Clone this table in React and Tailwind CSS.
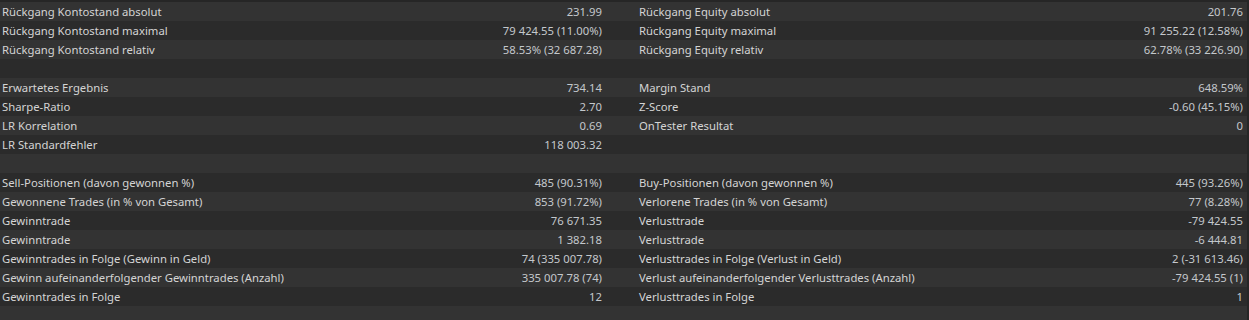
const rows = [
  ['Rückgang Kontostand absolut', '231.99', 'Rückgang Equity absolut', '201.76'],
  ['Rückgang Kontostand maximal', '79 424.55 (11.00%)', 'Rückgang Equity maximal', '91 255.22 (12.58%)'],
  ['Rückgang Kontostand relativ', '58.53% (32 687.28)', 'Rückgang Equity relativ', '62.78% (33 226.90)'],
  null,
  ['Erwartetes Ergebnis', '734.14', 'Margin Stand', '648.59%'],
  ['Sharpe-Ratio', '2.70', 'Z-Score', '-0.60 (45.15%)'],
  ['LR Korrelation', '0.69', 'OnTester Resultat', '0'],
  ['LR Standardfehler', '118 003.32', '', ''],
  null,
  ['Sell-Positionen (davon gewonnen %)', '485 (90.31%)', 'Buy-Positionen (davon gewonnen %)', '445 (93.26%)'],
  ['Gewonnene Trades (in % von Gesamt)', '853 (91.72%)', 'Verlorene Trades (in % von Gesamt)', '77 (8.28%)'],
  ['Gewinntrade', '76 671.35', 'Verlusttrade', '-79 424.55'],
  ['Gewinntrade', '1 382.18', 'Verlusttrade', '-6 444.81'],
  ['Gewinntrades in Folge (Gewinn in Geld)', '74 (335 007.78)', 'Verlusttrades in Folge (Verlust in Geld)', '2 (-31 613.46)'],
  ['Gewinn aufeinanderfolgender Gewinntrades (Anzahl)', '335 007.78 (74)', 'Verlust aufeinanderfolgender Verlusttrades (Anzahl)', '-79 424.55 (1)'],
  ['Gewinntrades in Folge', '12', 'Verlusttrades in Folge', '1'],
  null,
]

function Row({ data, index }) {
  const bg = index % 2 === 0 ? 'bg-[#333333]' : 'bg-[#2b2b2b]'
  return (
    <div className={`flex h-[19px] w-[1247px] items-center ${bg}`}>
      {data && (
        <>
          <div className="flex w-[602px] justify-between pl-[2px]">
            <span className="text-[#d4d4d4]">{data[0]}</span>
            <span className="text-[#c4c8cc]">{data[1]}</span>
          </div>
          <div className="w-[37px]" />
          <div className="flex w-[604px] justify-between">
            <span className="text-[#d4d4d4]">{data[2]}</span>
            <span className="text-[#c4c8cc]">{data[3]}</span>
          </div>
        </>
      )}
    </div>
  )
}

export default function App() {
  return (
    <div
      className="h-[320px] w-[1249px] overflow-hidden bg-[#262626] pt-[2px] text-[11.3px] leading-none"
      style={{ fontFamily: '"Noto Sans", sans-serif' }}
    >
      {rows.map((r, i) => (
        <Row key={i} data={r} index={i} />
      ))}
    </div>
  )
}
